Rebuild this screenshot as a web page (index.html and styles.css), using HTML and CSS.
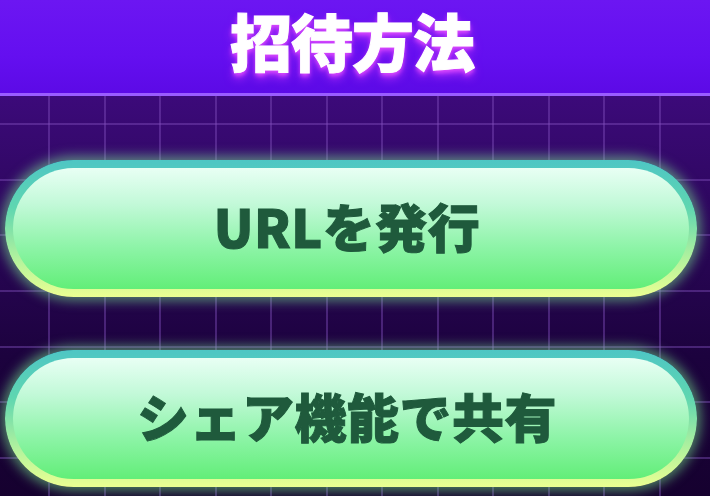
FILE: index.html
```html
<!DOCTYPE html>
<html lang="ja">
<head>
<meta charset="utf-8">
<link rel="stylesheet" href="styles.css">
</head>
<body>
<div class="page">
  <header class="header">
    <h1 class="title">招待方法</h1>
  </header>
  <main class="stage">
    <button class="pill">URLを発行</button>
    <button class="pill">シェア機能で共有</button>
  </main>
</div>
</body>
</html>
```
FILE: styles.css
```css
html, body {
  margin: 0;
  padding: 0;
  width: 710px;
  height: 496px;
  overflow: hidden;
  background: #1a0035;
}
.page {
  width: 710px;
  height: 496px;
  display: flex;
  flex-direction: column;
}
.header {
  height: 93px;
  flex: none;
  background: linear-gradient(180deg, #6c16f2 0%, #640ff0 60%, #5c0ae6 100%);
  border-bottom: 3px solid #9a5cff;
  display: flex;
  justify-content: center;
  align-items: flex-start;
}
.title {
  margin: 0 6px 0 0;
  padding-top: 2px;
  font-family: "Noto Sans CJK JP", sans-serif;
  font-weight: 900;
  font-size: 62px;
  line-height: 76px;
  color: #ffffff;
  letter-spacing: -1px;
  -webkit-text-stroke: 1px #ffffff;
  text-shadow: 0 3px 4px rgba(230, 80, 255, 0.9), 0 6px 10px rgba(220, 60, 255, 0.6);
}
.stage {
  flex: 1;
  display: flex;
  flex-direction: column;
  gap: 53px;
  padding: 64px 0 0 5px;
  background:
    repeating-linear-gradient(90deg, transparent 0 48px, rgba(130, 80, 190, 0.42) 48px 50px, transparent 50px 55.5px),
    repeating-linear-gradient(180deg, transparent 0 27px, rgba(130, 80, 190, 0.42) 27px 29px, transparent 29px 55.7px),
    linear-gradient(180deg, #3c0a7a 0%, #2a0658 35%, #1c023e 65%, #16012f 100%);
}
.pill {
  width: 692px;
  height: 137px;
  box-sizing: border-box;
  border: 8px solid transparent;
  border-radius: 70px;
  background:
    linear-gradient(180deg, #e8fff4 0%, #c2f9d8 30%, #8ef4a8 65%, #62ee78 100%) padding-box,
    linear-gradient(180deg, #4ec6c4 0%, #5fd6b0 35%, #b8f49c 75%, #eaff92 100%) border-box;
  box-shadow: 0 0 12px 4px rgba(130, 255, 150, 0.5);
  font-family: "Noto Sans CJK JP", sans-serif;
  font-weight: 900;
  font-size: 52px;
  color: #1f5a3c;
  -webkit-text-stroke: 1px #1f5a3c;
  padding: 0 8px 6px 0;
  display: flex;
  justify-content: center;
  align-items: center;
  letter-spacing: 0.5px;
}
```
